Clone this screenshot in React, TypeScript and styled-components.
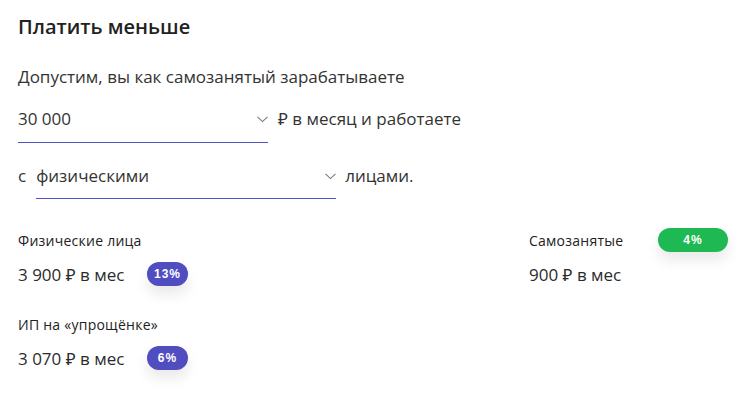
import React from "react";
import styled, { createGlobalStyle } from "styled-components";

const Global = createGlobalStyle`
  html, body { margin: 0; padding: 0; background: #fff; }
  body { font-family: "Open Sans", "Noto Sans", sans-serif; color: #2b2b2b; }
  * { box-sizing: border-box; }
`;

const Page = styled.div`
  width: 744px;
  height: 404px;
  padding: 13px 16px 0 18px;
  background: #fff;
`;

const Title = styled.h2`
  margin: 0;
  font-size: 20px;
  line-height: 28px;
  font-weight: 600;
  color: #222;
`;

const Sentence = styled.p`
  margin: 24px 0 0;
  font-size: 17px;
  line-height: 24px;
  color: #333;
`;

const Line = styled.div<{ $gap: number }>`
  display: flex;
  align-items: flex-start;
  margin-top: ${(p) => p.$gap}px;
  font-size: 17px;
  line-height: 24px;
  color: #333;
`;

const Word = styled.span<{ $ml?: number }>`
  margin-left: ${(p) => p.$ml ?? 0}px;
`;

const Select = styled.div<{ $w: number; $ml?: number; $pb: number }>`
  display: flex;
  align-items: center;
  justify-content: space-between;
  width: ${(p) => p.$w}px;
  margin-left: ${(p) => p.$ml ?? 0}px;
  padding-bottom: ${(p) => p.$pb}px;
  border-bottom: 1px solid #5153c4;
  color: #333;
`;

const Chevron = () => (
  <svg width="11" height="7" viewBox="0 0 11 7" fill="none">
    <path d="M0.5 0.8 L5.5 5.6 L10.5 0.8" stroke="#7a7a7a" strokeWidth="1.1" />
  </svg>
);

const Results = styled.div`
  display: grid;
  grid-template-columns: 511px 1fr;
  margin-top: 29px;
`;

const Column = styled.div`
  display: flex;
  flex-direction: column;
  gap: 26px;
`;

const Item = styled.div`
  display: flex;
  flex-direction: column;
`;

const LabelRow = styled.div`
  display: flex;
  align-items: center;
  height: 24px;
`;

const Label = styled.span<{ $w?: number }>`
  font-size: 14px;
  font-weight: 500;
  letter-spacing: 0.25px;
  color: #222;
  width: ${(p) => (p.$w ? `${p.$w}px` : "auto")};
`;

const ValueRow = styled.div`
  display: flex;
  align-items: center;
  height: 24px;
  margin-top: 10px;
`;

const Value = styled.span<{ $w?: number }>`
  font-size: 17px;
  color: #2b2b2b;
  width: ${(p) => (p.$w ? `${p.$w}px` : "auto")};
`;

const Badge = styled.span<{ $color: string; $w: number }>`
  display: inline-flex;
  align-items: center;
  justify-content: center;
  width: ${(p) => p.$w}px;
  height: 24px;
  border-radius: 12px;
  background: ${(p) => p.$color};
  color: #fff;
  font-family: "Liberation Sans", Arial, sans-serif;
  font-size: 12px;
  font-weight: 700;
  letter-spacing: 1px;
  box-shadow: 0 8px 14px rgba(0, 0, 0, 0.09);
`;

export default function App() {
  return (
    <>
      <Global />
      <Page>
        <Title>Платить меньше</Title>
        <Sentence>Допустим, вы как самозанятый зарабатываете</Sentence>
        <Line $gap={18}>
          <Select $w={250} $pb={11}>
            <span>30 000</span>
            <Chevron />
          </Select>
          <Word $ml={10}>₽ в месяц и работаете</Word>
        </Line>
        <Line $gap={21}>
          <Word>с</Word>
          <Select $w={300} $ml={10} $pb={10}>
            <span>физическими</span>
            <Chevron />
          </Select>
          <Word $ml={9}>лицами.</Word>
        </Line>
        <Results>
          <Column>
            <Item>
              <LabelRow>
                <Label>Физические лица</Label>
              </LabelRow>
              <ValueRow>
                <Value $w={129}>3 900 ₽ в мес</Value>
                <Badge $color="#4f4dbf" $w={41}>13%</Badge>
              </ValueRow>
            </Item>
            <Item>
              <LabelRow>
                <Label>ИП на «упрощёнке»</Label>
              </LabelRow>
              <ValueRow>
                <Value $w={129}>3 070 ₽ в мес</Value>
                <Badge $color="#4f4dbf" $w={41}>6%</Badge>
              </ValueRow>
            </Item>
          </Column>
          <Column>
            <Item>
              <LabelRow>
                <Label $w={129}>Самозанятые</Label>
                <Badge $color="#1fb954" $w={70}>4%</Badge>
              </LabelRow>
              <ValueRow>
                <Value>900 ₽ в мес</Value>
              </ValueRow>
            </Item>
          </Column>
        </Results>
      </Page>
    </>
  );
}
